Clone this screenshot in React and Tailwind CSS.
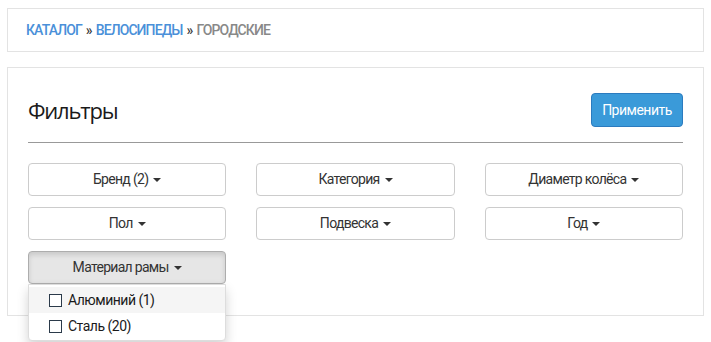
const FILTERS = [
  { label: 'Бренд (2)' },
  { label: 'Категория' },
  { label: 'Диаметр колёса' },
  { label: 'Пол' },
  { label: 'Подвеска' },
  { label: 'Год' },
];

const MATERIALS = [
  { label: 'Алюминий (1)', hover: true },
  { label: 'Сталь (20)' },
];

function Caret() {
  return (
    <span className="ml-[5px] inline-block h-0 w-0 border-x-[4px] border-t-[4px] border-x-transparent border-t-[#333] align-middle" />
  );
}

function FilterButton({ label, active }) {
  return (
    <button
      className={`flex h-[33px] w-full items-center justify-center rounded-[4px] border text-[14px] tracking-[-0.7px] text-[#333] ${
        active
          ? 'border-[#adadad] bg-[#e6e6e6] shadow-[inset_0_3px_5px_rgba(0,0,0,0.125)]'
          : 'border-[#ccc] bg-white'
      }`}
    >
      {label}
      <Caret />
    </button>
  );
}

export default function App() {
  return (
    <div className="min-h-[342px] bg-white px-[7px] pt-[8px] font-['Roboto',sans-serif]">
      {/* хлебные крошки */}
      <div className="flex h-[44px] items-center border border-[#e3e3e3] px-[18px] pt-[1px] text-[14px] font-medium tracking-[-0.9px]">
        <a className="text-[#4a90d9]">КАТАЛОГ</a>
        <span className="mx-[4px] text-[#333]">»</span>
        <a className="text-[#4a90d9]">ВЕЛОСИПЕДЫ</a>
        <span className="mx-[4px] text-[#333]">»</span>
        <span className="text-[#888]">ГОРОДСКИЕ</span>
      </div>

      {/* фильтры */}
      <div className="mt-[15px] h-[249px] border border-[#e3e3e3] px-[20px] pt-[25px]">
        <div className="flex items-center justify-between">
          <h2 className="font-['Open_Sans',sans-serif] text-[22px] leading-[34px] tracking-[-1.2px] text-[#1a1a1a]">Фильтры</h2>
          <button className="h-[34px] w-[92px] rounded-[4px] border border-[#2b7bbf] bg-[#3a9ad9] text-[14px] tracking-[-0.5px] text-white">
            Применить
          </button>
        </div>
        <div className="mt-[15px] border-t border-[#999]" />

        <div className="mt-[20px] grid grid-cols-3 gap-x-[30px] gap-y-[11px]">
          {FILTERS.map((f) => (
            <FilterButton key={f.label} label={f.label} />
          ))}
          <div className="relative">
            <FilterButton label="Материал рамы" active />
            <div className="absolute left-0 top-[33px] z-10 w-full rounded-b-[4px] border border-[#ddd] bg-white pb-[1px] pt-[2px] shadow-[0_6px_12px_rgba(0,0,0,0.175)]">
              {MATERIALS.map((m) => (
                <label
                  key={m.label}
                  className={`flex h-[26px] items-center pl-[20px] text-[14px] tracking-[-0.5px] text-[#1a1a1a] ${
                    m.hover ? 'bg-[#f5f5f5]' : ''
                  }`}
                >
                  <span className="mr-[6px] inline-block h-[13px] w-[13px] border border-[#2b3a4a] bg-white" />
                  {m.label}
                </label>
              ))}
            </div>
          </div>
        </div>
      </div>
    </div>
  );
}
